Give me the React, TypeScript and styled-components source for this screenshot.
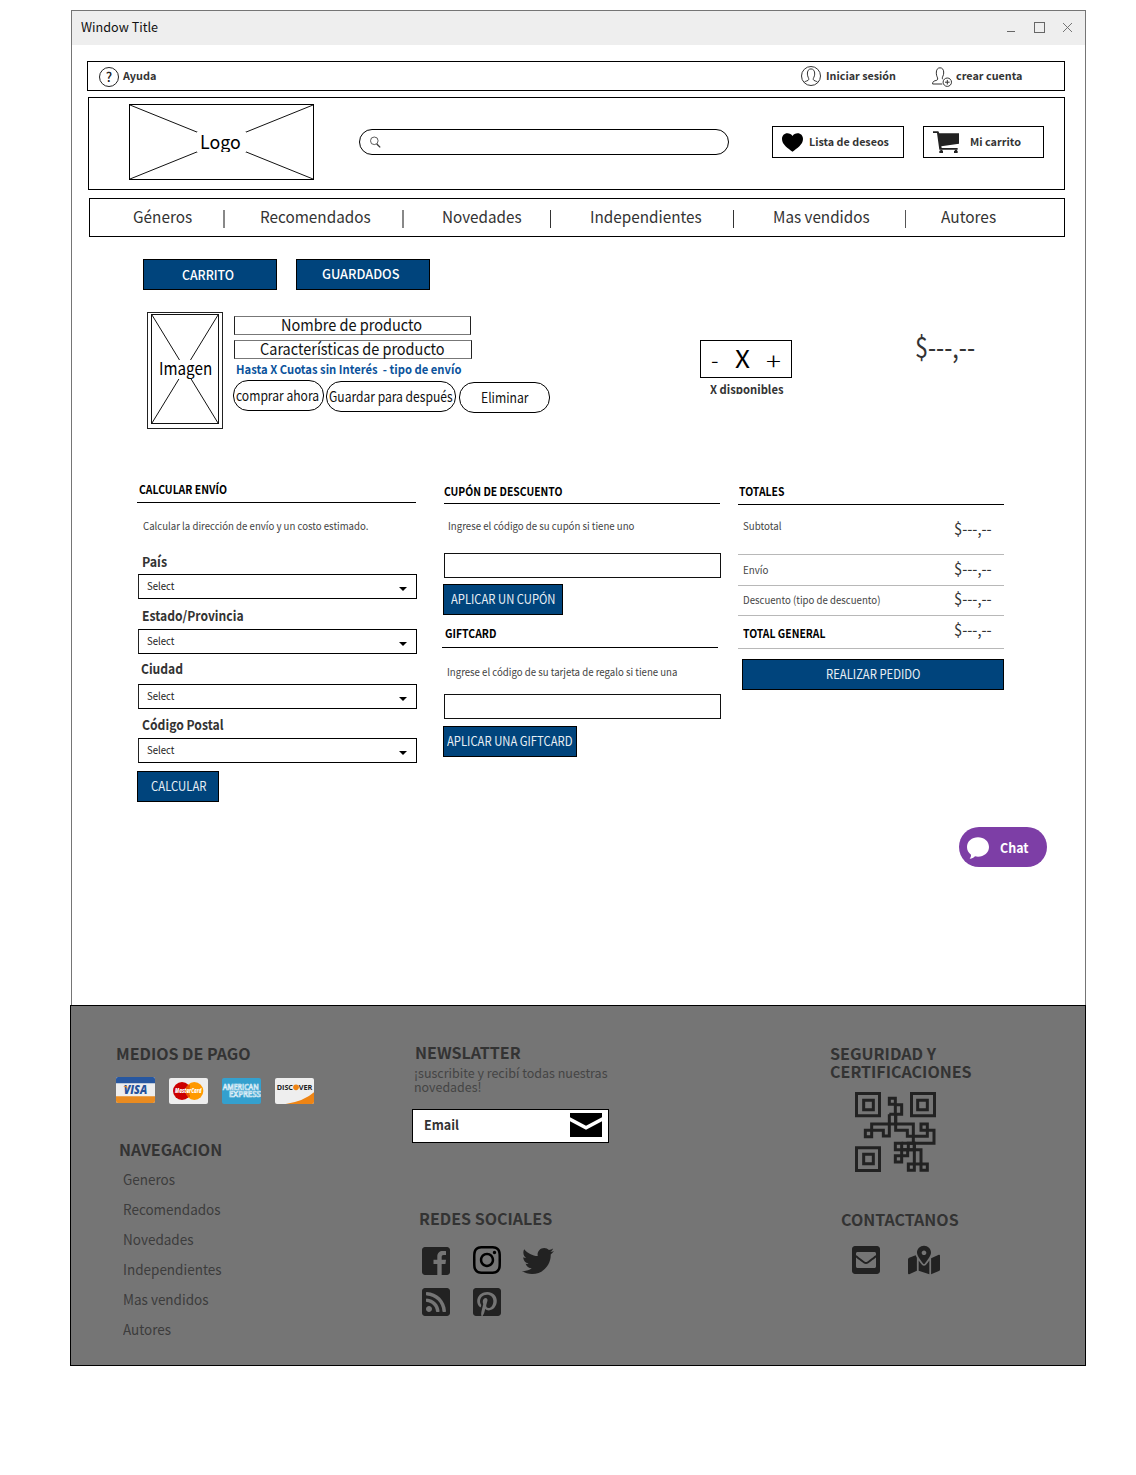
import React, { useLayoutEffect, useRef, useState } from "react";
import styled, { createGlobalStyle } from "styled-components";
import {
  FaTwitter,
  FaInstagram,
  FaRssSquare,
  FaPinterestSquare,
  FaEnvelopeSquare,
  FaMapMarkedAlt,
} from "react-icons/fa";

const font = `"Noto Sans CJK SC", "Noto Sans", sans-serif`;

const GlobalStyle = createGlobalStyle`
  * { box-sizing: border-box; }
  body { margin: 0; background: #fff; font-family: ${font}; color: #000; }
  svg { display: block; flex: none; }
`;

/* ---------- text fitted to a fixed measure ---------- */

const FitBox = styled.span<{
  $w: number; $size: number; $weight: number; $color: string; $lh: number; $mt: number; $ml: number;
}>`
  display: block;
  flex: none;
  width: ${(p) => p.$w}px;
  height: ${(p) => p.$lh}px;
  line-height: ${(p) => p.$lh}px;
  margin: ${(p) => p.$mt}px 0 0 ${(p) => p.$ml}px;
  font-size: ${(p) => p.$size}px;
  font-weight: ${(p) => p.$weight};
  color: ${(p) => p.$color};
  white-space: pre;
`;

const FitInner = styled.span`
  display: inline-block;
  transform-origin: 0 50%;
  margin-left: -0.01em;
`;

type FitProps = {
  w: number; size: number; weight?: number; color?: string; lh?: number; mt?: number; ml?: number; children: string;
};

function Fit({ w, size, weight = 400, color = "#000", lh = 20, mt = 0, ml = 0, children }: FitProps) {
  const ref = useRef<HTMLSpanElement>(null);
  const [scale, setScale] = useState(1);
  useLayoutEffect(() => {
    const el = ref.current;
    if (!el) return;
    const previous = el.style.transform;
    el.style.transform = "none";
    const natural = el.getBoundingClientRect().width;
    el.style.transform = previous;
    if (natural > 0) setScale((w + size * 0.04) / natural);
  }, [w, size, weight, children]);
  return (
    <FitBox $w={w} $size={size} $weight={weight} $color={color} $lh={lh} $mt={mt} $ml={ml}>
      <FitInner ref={ref} style={{ transform: `scaleX(${scale})` }}>{children}</FitInner>
    </FitBox>
  );
}

/* ---------- window ---------- */

const Page = styled.div`
  width: 1136px;
  height: 1475px;
  padding: 10px 0 0 70px;
  background: #fff;
`;

const Window = styled.div`
  width: 1015px;
  height: 995px;
  margin-left: 1px;
  border: 1px solid #757575;
  border-bottom: 0;
  display: flex;
  flex-direction: column;
  align-items: flex-start;
`;

const TitleBar = styled.header`
  width: 100%;
  height: 34px;
  flex: none;
  background: #eee;
  display: flex;
  align-items: center;
  justify-content: space-between;
  padding: 0 12px 2px 9px;
`;

const Bar = styled.section<{ $x: number; $mt: number; $h: number; $pb?: number }>`
  width: ${(p) => 1065 - p.$x}px;
  height: ${(p) => p.$h}px;
  flex: none;
  margin: ${(p) => p.$mt}px 0 0 ${(p) => p.$x - 72}px;
  padding-bottom: ${(p) => p.$pb ?? 0}px;
  border: 1px solid #000;
  display: flex;
  align-items: center;
`;

const IconSlot = styled.span<{ $ml: number; $mt?: number }>`
  flex: none;
  margin: ${(p) => p.$mt ?? 0}px 0 0 ${(p) => p.$ml}px;
`;

const HelpMark = styled.span`
  width: 20px;
  height: 20px;
  margin: 2px 0 0 11px;
  border: 1px solid #222;
  border-radius: 50%;
  font-size: 13px;
  font-weight: 500;
  line-height: 17px;
  text-align: center;
  color: #222;
`;

const LogoBox = styled.div`
  width: 185px;
  height: 76px;
  margin-left: 40px;
  border: 1px solid #000;
  display: grid;
  > * { grid-area: 1 / 1; }
`;

const Patch = styled.div<{ $w: number; $h: number; $mt: number; $ml?: number }>`
  justify-self: center;
  width: ${(p) => p.$w}px;
  height: ${(p) => p.$h}px;
  margin: ${(p) => p.$mt}px 0 0 ${(p) => p.$ml ?? 0}px;
  background: #fff;
  overflow: hidden;
`;

const Search = styled.div`
  width: 370px;
  height: 26px;
  margin-left: 45px;
  padding-left: 10px;
  border: 1px solid #000;
  border-radius: 13px;
  display: flex;
  align-items: center;
`;

const HeaderButton = styled.div<{ $w: number; $ml: number }>`
  width: ${(p) => p.$w}px;
  height: 32px;
  margin-left: ${(p) => p.$ml}px;
  padding-left: 9px;
  border: 1px solid #000;
  display: flex;
  align-items: center;
`;

const Separator = styled.i<{ $ml: number; $w: number; $c: string }>`
  width: ${(p) => p.$w}px;
  height: 18px;
  margin: 5px 0 0 ${(p) => p.$ml}px;
  background: ${(p) => p.$c};
`;

/* ---------- main ---------- */

const Tabs = styled.div`
  display: flex;
  gap: 19px;
  margin: 22px 0 0 71px;
`;

const BlueButton = styled.div<{ $w: number; $mt?: number; $ml?: number; $pl: number; $pt?: number }>`
  width: ${(p) => p.$w}px;
  height: 31px;
  flex: none;
  margin: ${(p) => p.$mt ?? 0}px 0 0 ${(p) => p.$ml ?? 0}px;
  padding: ${(p) => p.$pt ?? 4}px 0 0 ${(p) => p.$pl - 1}px;
  background: #00447c;
  border: 1px solid #000;
`;

const ProductRow = styled.div`
  display: flex;
  align-items: flex-start;
  height: 117px;
  margin: 22px 0 0 75px;
`;

const ImageFrame = styled.div`
  width: 76px;
  height: 117px;
  padding: 1px 3px 4px;
  border: 1px solid #222;
`;

const ImageInner = styled.div`
  width: 68px;
  height: 110px;
  border: 1px solid #111;
  display: grid;
  > * { grid-area: 1 / 1; }
`;

const Info = styled.div`
  width: 317px;
  margin-left: 10px;
`;

const FieldFrame = styled.div<{ $w: number; $mt: number; $pl: number }>`
  width: ${(p) => p.$w}px;
  height: 19px;
  margin: ${(p) => p.$mt}px 0 0 1px;
  padding-left: ${(p) => p.$pl}px;
  border: 1px solid #777;
  border-left-color: #222;
  border-right-color: #222;
`;

const Pills = styled.div`
  display: flex;
  align-items: flex-start;
  margin-top: 1px;
`;

const Pill = styled.div<{ $w: number; $ml: number; $mt: number; $pl: number }>`
  width: ${(p) => p.$w}px;
  height: 31px;
  flex: none;
  margin: ${(p) => p.$mt}px 0 0 ${(p) => p.$ml}px;
  padding: 4px 0 0 ${(p) => p.$pl}px;
  border: 1px solid #000;
  border-radius: 15px;
`;

const Quantity = styled.div`
  width: 92px;
  margin: 28px 0 0 150px;
`;

const Stepper = styled.div`
  width: 92px;
  height: 38px;
  padding-left: 10px;
  border: 1px solid #000;
  display: flex;
  align-items: flex-start;
`;

const Availability = styled.div`
  height: 16px;
  overflow: hidden;
  padding-left: 10px;
`;

const Columns = styled.div`
  display: flex;
  align-items: flex-start;
  margin: 50px 0 0 65px;
  height: 323px;
`;

const Column = styled.div<{ $w: number; $ml: number }>`
  width: ${(p) => p.$w}px;
  flex: none;
  margin-left: ${(p) => p.$ml}px;
`;

const Rule = styled.div<{ $w: number; $mt: number; $ml?: number }>`
  width: ${(p) => p.$w}px;
  height: 1px;
  margin: ${(p) => p.$mt}px 0 0 ${(p) => p.$ml ?? 0}px;
  background: #000;
`;

const SelectBox = styled.div<{ $mt: number }>`
  width: 279px;
  height: 25px;
  margin: ${(p) => p.$mt}px 0 0 1px;
  padding: 1px 9px 0 8px;
  border: 1px solid #000;
  border-left-color: #222;
  display: flex;
  justify-content: space-between;
  align-items: flex-start;
`;

const Caret = styled.i`
  margin-top: 10.5px;
  border: 4.5px solid transparent;
  border-top: 4.5px solid #000;
  border-bottom: 0;
`;

const CodeInput = styled.div<{ $mt: number }>`
  width: 277px;
  height: 25px;
  margin: ${(p) => p.$mt}px 0 0 2px;
  border: 1px solid #111;
`;

const TotalRow = styled.div<{ $h: number }>`
  width: 266px;
  height: ${(p) => p.$h}px;
  padding: 0 13px 0 5px;
  border-bottom: 1px solid #b8b8b8;
  display: flex;
  align-items: flex-start;
  justify-content: space-between;
`;

const ChatButton = styled.div`
  width: 88px;
  height: 40px;
  margin: 25px 0 0 887px;
  padding: 2px 0 0 8px;
  border-radius: 20px;
  background: #7d3ea6;
  display: flex;
  align-items: center;
`;

/* ---------- footer ---------- */

const Footer = styled.footer`
  width: 1016px;
  height: 361px;
  background: #757575;
  border: 1px solid #000;
  display: flex;
  align-items: flex-start;
`;

const FooterColumn = styled.div<{ $w: number; $ml: number }>`
  width: ${(p) => p.$w}px;
  flex: none;
  margin-left: ${(p) => p.$ml}px;
`;

const Cards = styled.div`
  display: flex;
  gap: 14px;
  margin-top: 14px;
  height: 27px;
`;

const Links = styled.nav`
  display: flex;
  flex-direction: column;
  gap: 10px;
  margin: 10px 0 0 7px;
`;

const EmailBox = styled.div`
  width: 197px;
  height: 34px;
  margin-top: 15px;
  padding: 3px 6px 0 11px;
  background: #fff;
  border: 1px solid #000;
  display: flex;
  align-items: flex-start;
  justify-content: space-between;
`;

const IconRow = styled.div<{ $mt: number; $ml: number }>`
  display: flex;
  align-items: flex-start;
  margin: ${(p) => p.$mt}px 0 0 ${(p) => p.$ml}px;
  color: #222;
`;

/* ---------- drawings ---------- */

const WindowControls = () => (
  <svg width="68" height="14" viewBox="0 0 68 14" fill="none" stroke="#666">
    <path d="M2 11.5h8" />
    <rect x="29.5" y="2.5" width="10" height="10" />
    <path d="M58 3l9 9M67 3l-9 9" strokeWidth="0.9" />
  </svg>
);

const UserIcon = () => (
  <svg width="20" height="20" viewBox="0 0 20 20" fill="none" stroke="#333" strokeWidth="1">
    <circle cx="10" cy="10" r="9.5" />
    <path d="M3.2 16.4c.8-1.5 4.4-1.3 4.6-3.1.1-1.2-1.3-2.6-1.4-5.2C6.200 4.900 7.600 2.900 10 2.900s3.900 2 3.700 5.200c-.1 2.600-1.600 4-1.500 5.200.2 1.800 3.800 1.600 4.600 3.100" />
  </svg>
);

const UserPlusIcon = () => (
  <svg width="20" height="20" viewBox="0 0 20 20" fill="none" stroke="#333" strokeWidth="1">
    <path d="M10.200 17H.6c-.2-4.500 5-2.500 5.100-5C5.800 10.500 4.400 9.300 4.300 6.200 4.200 2.700 5.600.8 8 .8s3.900 1.900 3.700 5.200c-.1 2.700-1.500 3.800-1.400 5.200 0 .5.300.9.800 1.200" />
    <circle cx="15.300" cy="15.200" r="4.200" />
    <path d="M15.300 12.900v4.600M13 15.200h4.600" />
  </svg>
);

const SearchIcon = () => (
  <svg width="11" height="12" viewBox="0 0 11 12" fill="none" stroke="#333">
    <circle cx="4.300" cy="4.800" r="3.800" strokeWidth="0.8" />
    <path d="M6.800 8l3.400 3.400" strokeWidth="1.300" />
  </svg>
);

const HeartIcon = () => (
  <svg width="21" height="19" viewBox="0 0 63 55">
    <path d="M31.500 55C18 45 0 34 0 17 0 7 7 0 16 0c7 0 12 3 15.500 8C35 3 40 0 47 0c9 0 16 7 16 17 0 17-18 28-31.500 38z" />
  </svg>
);

const CartIcon = () => (
  <svg width="26" height="22" viewBox="0 0 78 66" fill="#222">
    <path d="M0 1h16l3 5.500 59 .5v31l-53 8 1 5h48v5H19L12 6H0z" />
    <path d="M22 56h6v3h2v7H19v-7h3zM66 56h6v3h2v7H63v-7h3z" />
  </svg>
);

const Cross = ({ w, h }: { w: number; h: number }) => (
  <svg width={w} height={h} viewBox={`0 0 ${w} ${h}`} stroke="#111" strokeWidth="1">
    <path d={`M0 0L${w} ${h}M${w} 0L0 ${h}`} />
  </svg>
);

const Bubble = () => (
  <svg width="22" height="22" viewBox="0 0 66 66" fill="#fff">
    <path d="M33 1c18 0 33 12 33 29S51 59 33 59c-3 0-6-.3-9-1-4 4-9 7-16 7 3-4 4-7 4-12C4 47 0 39 0 30 0 13 15 1 33 1z" />
  </svg>
);

const Visa = () => (
  <svg width="39" height="26" viewBox="0 0 117 78">
    <rect width="117" height="78" rx="6" fill="#eee" />
    <path d="M0 19V6q0-6 6-6h105q6 0 6 6v13z" fill="#2757a0" />
    <path d="M0 58h117v14q0 6-6 6H6q-6 0-6-6z" fill="#e98b20" />
    <text x="23" y="51" fontSize="34" fontWeight="800" fontStyle="italic" fill="#25529b" textLength="71" lengthAdjust="spacingAndGlyphs" fontFamily='"Open Sans", sans-serif'>VISA</text>
    <path d="M21 27h11l4 10q-5-7-15-10z" fill="#e98b20" />
  </svg>
);

const Master = () => (
  <svg width="39" height="26" viewBox="0 0 117 78">
    <rect width="117" height="78" rx="6" fill="#eee" />
    <circle cx="39" cy="39" r="27" fill="#c00" />
    <circle cx="76" cy="39" r="27" fill="#f90" />
    <path d="M54 24h9M50 30h12M49 48h12M53 54h10" stroke="#c00" strokeWidth="2.500" />
    <text x="18" y="45" fontSize="18" fontWeight="800" fontStyle="italic" fill="#fff" textLength="80" lengthAdjust="spacingAndGlyphs" fontFamily='"Open Sans", sans-serif'>MasterCard</text>
  </svg>
);

const Amex = () => (
  <svg width="39" height="26" viewBox="0 0 117 78" fontFamily='"Open Sans", sans-serif'>
    <rect width="117" height="78" rx="6" fill="#34a0ce" />
    <g fontSize="24" fontWeight="600" fill="#34a0ce" stroke="#e0f0f8" strokeWidth="2">
      <text x="2" y="36" textLength="108" lengthAdjust="spacingAndGlyphs">AMERICAN</text>
      <text x="21" y="58" textLength="95" lengthAdjust="spacingAndGlyphs">EXPRESS</text>
    </g>
  </svg>
);

const Discover = () => (
  <svg width="39" height="26" viewBox="0 0 117 78" fontFamily='"Open Sans", sans-serif' fontSize="23" fontWeight="700" fill="#222">
    <rect width="117" height="78" rx="6" fill="#eee" />
    <path d="M117 43v29q0 6-6 6H32q55-8 85-35z" fill="#ee8414" />
    <text x="5" y="36" textLength="49" lengthAdjust="spacingAndGlyphs">DISC</text>
    <circle cx="63" cy="28" r="8.500" fill="#ee8414" />
    <text x="71" y="36" textLength="41" lengthAdjust="spacingAndGlyphs">VER</text>
  </svg>
);

const EnvelopeIcon = () => (
  <svg width="32" height="24" viewBox="0 0 96 72">
    <path d="M0 0h96v13L48 38 0 13zM0 25l48 25 48-25v47H0z" />
  </svg>
);

const FacebookIcon = () => (
  <svg width="32" height="32" viewBox="-32 0 512 512" fill="currentColor">
    <path d="M448 80v352c0 26.500-21.500 48-48 48h-85.300V302.800h60.600l8.700-67.600h-69.300V192c0-19.600 5.400-32.900 33.500-32.900H384V98.700c-6.200-.8-27.400-2.700-52.200-2.700-51.600 0-87 31.500-87 89.400v49.900H184v67.600h60.900V480H48c-26.500 0-48-21.500-48-48V80c0-26.500 21.500-48 48-48h352c26.500 0 48 21.500 48 48z" />
  </svg>
);

const QrIcon = () => (
  <svg width="81" height="80" viewBox="105 171 243 240" fill="none" stroke="#222" strokeWidth="9">
    <path d="M109.500 175.500h69v67h-69zM274.500 175.500h69v67h-69zM109.500 338.500h69v68h-69z" />
    <path d="M131 196h29v28h-29zM293 196h29v28h-29zM131 358h29v28h-29z" />
    <path d="M208 190h18v18h-18zM226 209h19v29h-19zM208 238h19v29" />
    <path d="M208 238v65h-18v-17h-35M136 286h19v19h-19zM155 286v-19h125v58" />
    <path d="M227 238v48h35v18h60v-18M303 267h19v19h-19zM322 286h20v39h-97" />
    <path d="M226 325h19v19h-19zM245 344h18v18h-18zM226 362h19v19h-19zM265 325h18v19h-18z" />
    <path d="M245 344h58v43M283 325v62M265 387h18v19h-18zM303 387h19v19h-19zM265 387h57" />
  </svg>
);

/* ---------- page ---------- */

const nav: { text: string; w: number; ml: number; sep?: [number, number, string] }[] = [
  { text: "Géneros", w: 58.5, ml: 43, sep: [31.5, 2, "#888"] },
  { text: "Recomendados", w: 110, ml: 35, sep: [32, 2, "#888"] },
  { text: "Novedades", w: 79, ml: 38, sep: [29, 1, "#333"] },
  { text: "Independientes", w: 111, ml: 39, sep: [32, 1, "#333"] },
  { text: "Mas vendidos", w: 96, ml: 39, sep: [36, 1, "#555"] },
  { text: "Autores", w: 54.5, ml: 35 },
];

const fields = [
  { label: "País", w: 24.5, ml: 5, mt: 15, gap: 3 },
  { label: "Estado/Provincia", w: 101, ml: 5, mt: 6, gap: 4 },
  { label: "Ciudad", w: 41.5, ml: 4.5, mt: 4, gap: 6 },
  { label: "Código Postal", w: 81, ml: 5, mt: 5, gap: 4 },
];

const totals = [
  { label: "Subtotal", w: 38, h: 50, mt: 11, pt: 13 },
  { label: "Envío", w: 25, h: 31, mt: 5, pt: 3 },
  { label: "Descuento (tipo de descuento)", w: 137, h: 30, mt: 4, pt: 2 },
  { label: "TOTAL GENERAL", w: 82, h: 33, mt: 6.8, pt: 3, bold: true },
];

const links: [string, number][] = [
  ["Generos", 51.5],
  ["Recomendados", 97],
  ["Novedades", 70],
  ["Independientes", 98],
  ["Mas vendidos", 85],
  ["Autores", 47.5],
];

const SmallBold = (p: { w: number; ml: number; children: string }) => (
  <Fit w={p.w} ml={p.ml} size={10.7} weight={700} color="#333">{p.children}</Fit>
);
const Heading = (p: { w: number; mt: number; ml?: number; children: string }) => (
  <Fit w={p.w} mt={p.mt} ml={p.ml} size={12} weight={700}>{p.children}</Fit>
);
const Note = (p: { w: number; mt: number; ml: number; children: string }) => (
  <Fit w={p.w} mt={p.mt} ml={p.ml} size={10.5} color="#444">{p.children}</Fit>
);
const ButtonText = (p: { w: number; children: string }) => (
  <Fit w={p.w} size={12.5} color="#e9eff5">{p.children}</Fit>
);
const FooterHeading = (p: { w: number; mt: number; ml?: number; lh?: number; children: string }) => (
  <Fit w={p.w} mt={p.mt} ml={p.ml} lh={p.lh} size={16} weight={700} color="#333">{p.children}</Fit>
);

export default function App() {
  return (
    <Page>
      <GlobalStyle />
      <Window>
        <TitleBar>
          <Fit w={76.5} size={13} color="#111">Window Title</Fit>
          <WindowControls />
        </TitleBar>

        <Bar $x={87} $mt={16} $h={30}>
          <HelpMark>?</HelpMark>
          <SmallBold w={33} ml={4}>Ayuda</SmallBold>
          <IconSlot $ml={645}><UserIcon /></IconSlot>
          <SmallBold w={69.5} ml={5}>Iniciar sesión</SmallBold>
          <IconSlot $ml={36.5} $mt={1}><UserPlusIcon /></IconSlot>
          <SmallBold w={66} ml={4}>crear cuenta</SmallBold>
        </Bar>

        <Bar $x={88} $mt={6} $h={93} $pb={3}>
          <LogoBox>
            <Cross w={183} h={74} />
            <Patch $w={49} $h={20} $mt={27}>
              <Fit w={40} size={18} mt={-1} ml={3.5}>Logo</Fit>
            </Patch>
          </LogoBox>
          <Search><SearchIcon /></Search>
          <HeaderButton $w={132} $ml={43}>
            <HeartIcon />
            <SmallBold w={79.5} ml={6}>Lista de deseos</SmallBold>
          </HeaderButton>
          <HeaderButton $w={121} $ml={19}>
            <CartIcon />
            <SmallBold w={50.5} ml={11}>Mi carrito</SmallBold>
          </HeaderButton>
        </Bar>

        <Bar $x={89} $mt={8} $h={39} $pb={3}>
          {nav.map((n) => (
            <React.Fragment key={n.text}>
              <Fit w={n.w} ml={n.ml} size={16} color="#333">{n.text}</Fit>
              {n.sep && <Separator $ml={n.sep[0]} $w={n.sep[1]} $c={n.sep[2]} />}
            </React.Fragment>
          ))}
        </Bar>

        <Tabs>
          <BlueButton $w={134} $pl={39} $pt={5}>
            <Fit w={51.5} size={13} weight={500} color="#fff">CARRITO</Fit>
          </BlueButton>
          <BlueButton $w={134} $pl={26.5} $pt={4}>
            <Fit w={77} size={13} weight={500} color="#fff">GUARDADOS</Fit>
          </BlueButton>
        </Tabs>

        <ProductRow>
          <ImageFrame>
            <ImageInner>
              <Cross w={66} h={108} />
              <Patch $w={56} $h={19} $mt={45} $ml={0}>
                <Fit w={52.5} size={17} mt={-2} ml={2}>Imagen</Fit>
              </Patch>
            </ImageInner>
          </ImageFrame>
          <Info>
            <FieldFrame $w={237} $mt={4} $pl={46.5}>
              <Fit w={140.5} size={16} mt={-3} color="#111">Nombre de producto</Fit>
            </FieldFrame>
            <FieldFrame $w={238} $mt={5} $pl={25}>
              <Fit w={184} size={16} mt={-3} color="#111">Características de producto</Fit>
            </FieldFrame>
            <Fit w={225} size={12} weight={700} color="#0b539c" ml={3.5}>{"Hasta X Cuotas sin Interés  - tipo de envío"}</Fit>
            <Pills>
              <Pill $w={91} $ml={-0.5} $mt={0} $pl={3}>
                <Fit w={82.5} size={14} color="#111">comprar ahora</Fit>
              </Pill>
              <Pill $w={130} $ml={2.5} $mt={1} $pl={2}>
                <Fit w={123} size={14} color="#111">Guardar para después</Fit>
              </Pill>
              <Pill $w={91} $ml={3} $mt={2} $pl={21}>
                <Fit w={47} size={14} color="#111">Eliminar</Fit>
              </Pill>
            </Pills>
          </Info>
          <Quantity>
            <Stepper>
              <Fit w={6.5} size={24} lh={36} weight={300}>-</Fit>
              <Fit w={14} size={24} lh={36} mt={-1} ml={18}>X</Fit>
              <Fit w={14} size={24} lh={36} mt={1} ml={16.5} weight={300}>+</Fit>
            </Stepper>
            <Availability>
              <Fit w={73} size={12} weight={700} color="#333" mt={1}>X disponibles</Fit>
            </Availability>
          </Quantity>
          <Fit w={59} size={28} ml={123.5} mt={24} color="#333">$---,--</Fit>
        </ProductRow>

        <Columns>
          <Column $w={280} $ml={0}>
            <Heading w={87.5} mt={0} ml={2.5}>CALCULAR ENVÍO</Heading>
            <Rule $w={279} $mt={3} />
            <Note w={225} mt={13} ml={6}>Calcular la dirección de envío y un costo estimado.</Note>
            {fields.map((f) => (
              <React.Fragment key={f.label}>
                <Fit w={f.w} mt={f.mt} ml={f.ml} size={13.5} weight={700} color="#333">{f.label}</Fit>
                <SelectBox $mt={f.gap}>
                  <Fit w={27} size={10.5} color="#222">Select</Fit>
                  <Caret />
                </SelectBox>
              </React.Fragment>
            ))}
            <BlueButton $w={82} $mt={8} $ml={0.4} $pl={13.5}>
              <ButtonText w={55}>CALCULAR</ButtonText>
            </BlueButton>
          </Column>

          <Column $w={280} $ml={25}>
            <Heading w={118} mt={2} ml={2}>CUPÓN DE DESCUENTO</Heading>
            <Rule $w={276} $mt={2} $ml={2} />
            <Note w={186} mt={12} ml={6.5}>Ingrese el código de su cupón si tiene uno</Note>
            <CodeInput $mt={17} />
            <BlueButton $w={120} $mt={6} $ml={1} $pl={8}>
              <ButtonText w={104}>APLICAR UN CUPÓN</ButtonText>
            </BlueButton>
            <Heading w={51} mt={8} ml={3}>GIFTCARD</Heading>
            <Rule $w={276} $mt={4} />
            <Note w={230} mt={14} ml={5.5}>Ingrese el código de su tarjeta de regalo si tiene una</Note>
            <CodeInput $mt={12} />
            <BlueButton $w={134} $mt={7} $ml={1} $pl={4.5}>
              <ButtonText w={125}>APLICAR UNA GIFTCARD</ButtonText>
            </BlueButton>
          </Column>

          <Column $w={266} $ml={16}>
            <Heading w={45} mt={2} ml={1}>TOTALES</Heading>
            <Rule $w={266} $mt={3} />
            {totals.map((t) => (
              <TotalRow key={t.label} $h={t.h}>
                <Fit w={t.w} mt={t.mt} size={t.bold ? 12 : 10.5} weight={t.bold ? 700 : 400} color={t.bold ? "#000" : "#444"}>{t.label}</Fit>
                <Fit w={37} mt={t.pt} size={16.5} color="#333">$---,--</Fit>
              </TotalRow>
            ))}
            <BlueButton $w={262} $mt={10} $ml={4} $pl={84}>
              <ButtonText w={94}>REALIZAR PEDIDO</ButtonText>
            </BlueButton>
          </Column>
        </Columns>

        <ChatButton>
          <Bubble />
          <Fit w={28} ml={11} size={13} weight={700} color="#fff">Chat</Fit>
        </ChatButton>
      </Window>

      <Footer>
        <FooterColumn $w={296} $ml={45}>
          <FooterHeading w={134} mt={37} ml={0.5}>MEDIOS DE PAGO</FooterHeading>
          <Cards>
            <Visa />
            <IconSlot $ml={0} $mt={1}><Master /></IconSlot>
            <IconSlot $ml={0} $mt={1}><Amex /></IconSlot>
            <IconSlot $ml={0} $mt={1}><Discover /></IconSlot>
          </Cards>
          <FooterHeading w={102.5} mt={35} ml={3.5}>NAVEGACION</FooterHeading>
          <Links>
            {links.map(([text, w]) => (
              <Fit key={text} w={w} size={14} color="#3c3c3c">{text}</Fit>
            ))}
          </Links>
        </FooterColumn>

        <FooterColumn $w={418} $ml={0}>
          <FooterHeading w={105} mt={36} ml={3}>NEWSLATTER</FooterHeading>
          <Fit w={193} size={13} lh={14} mt={4} ml={2.5} color="#444">¡suscribite y recibí todas nuestras</Fit>
          <Fit w={67} size={13} lh={14} ml={2.5} color="#444">novedades!</Fit>
          <EmailBox>
            <Fit w={34.5} size={13} weight={700} mt={2} color="#333">Email</Fit>
            <EnvelopeIcon />
          </EmailBox>
          <FooterHeading w={132.500} mt={65} ml={7}>REDES SOCIALES</FooterHeading>
          <IconRow $mt={16} $ml={8}>
            <IconSlot $ml={0} $mt={1}><FacebookIcon /></IconSlot>
            <IconSlot $ml={19}><FaInstagram size={32} color="#000" /></IconSlot>
            <IconSlot $ml={19} $mt={1}><FaTwitter size={32} /></IconSlot>
          </IconRow>
          <IconRow $mt={9} $ml={8}>
            <FaRssSquare size={32} />
            <IconSlot $ml={19}><FaPinterestSquare size={32} /></IconSlot>
          </IconRow>
        </FooterColumn>

        <FooterColumn $w={160} $ml={0}>
          <FooterHeading w={105.5} mt={38} ml={0} lh={18}>SEGURIDAD Y</FooterHeading>
          <FooterHeading w={141} mt={0} ml={0} lh={18}>CERTIFICACIONES</FooterHeading>
          <IconRow $mt={12} $ml={25}><QrIcon /></IconRow>
          <FooterHeading w={117} mt={37} ml={11}>CONTACTANOS</FooterHeading>
          <IconRow $mt={15} $ml={20}>
            <FaEnvelopeSquare size={32} />
            <IconSlot $ml={26}><FaMapMarkedAlt size={32} /></IconSlot>
          </IconRow>
        </FooterColumn>
      </Footer>
    </Page>
  );
}
